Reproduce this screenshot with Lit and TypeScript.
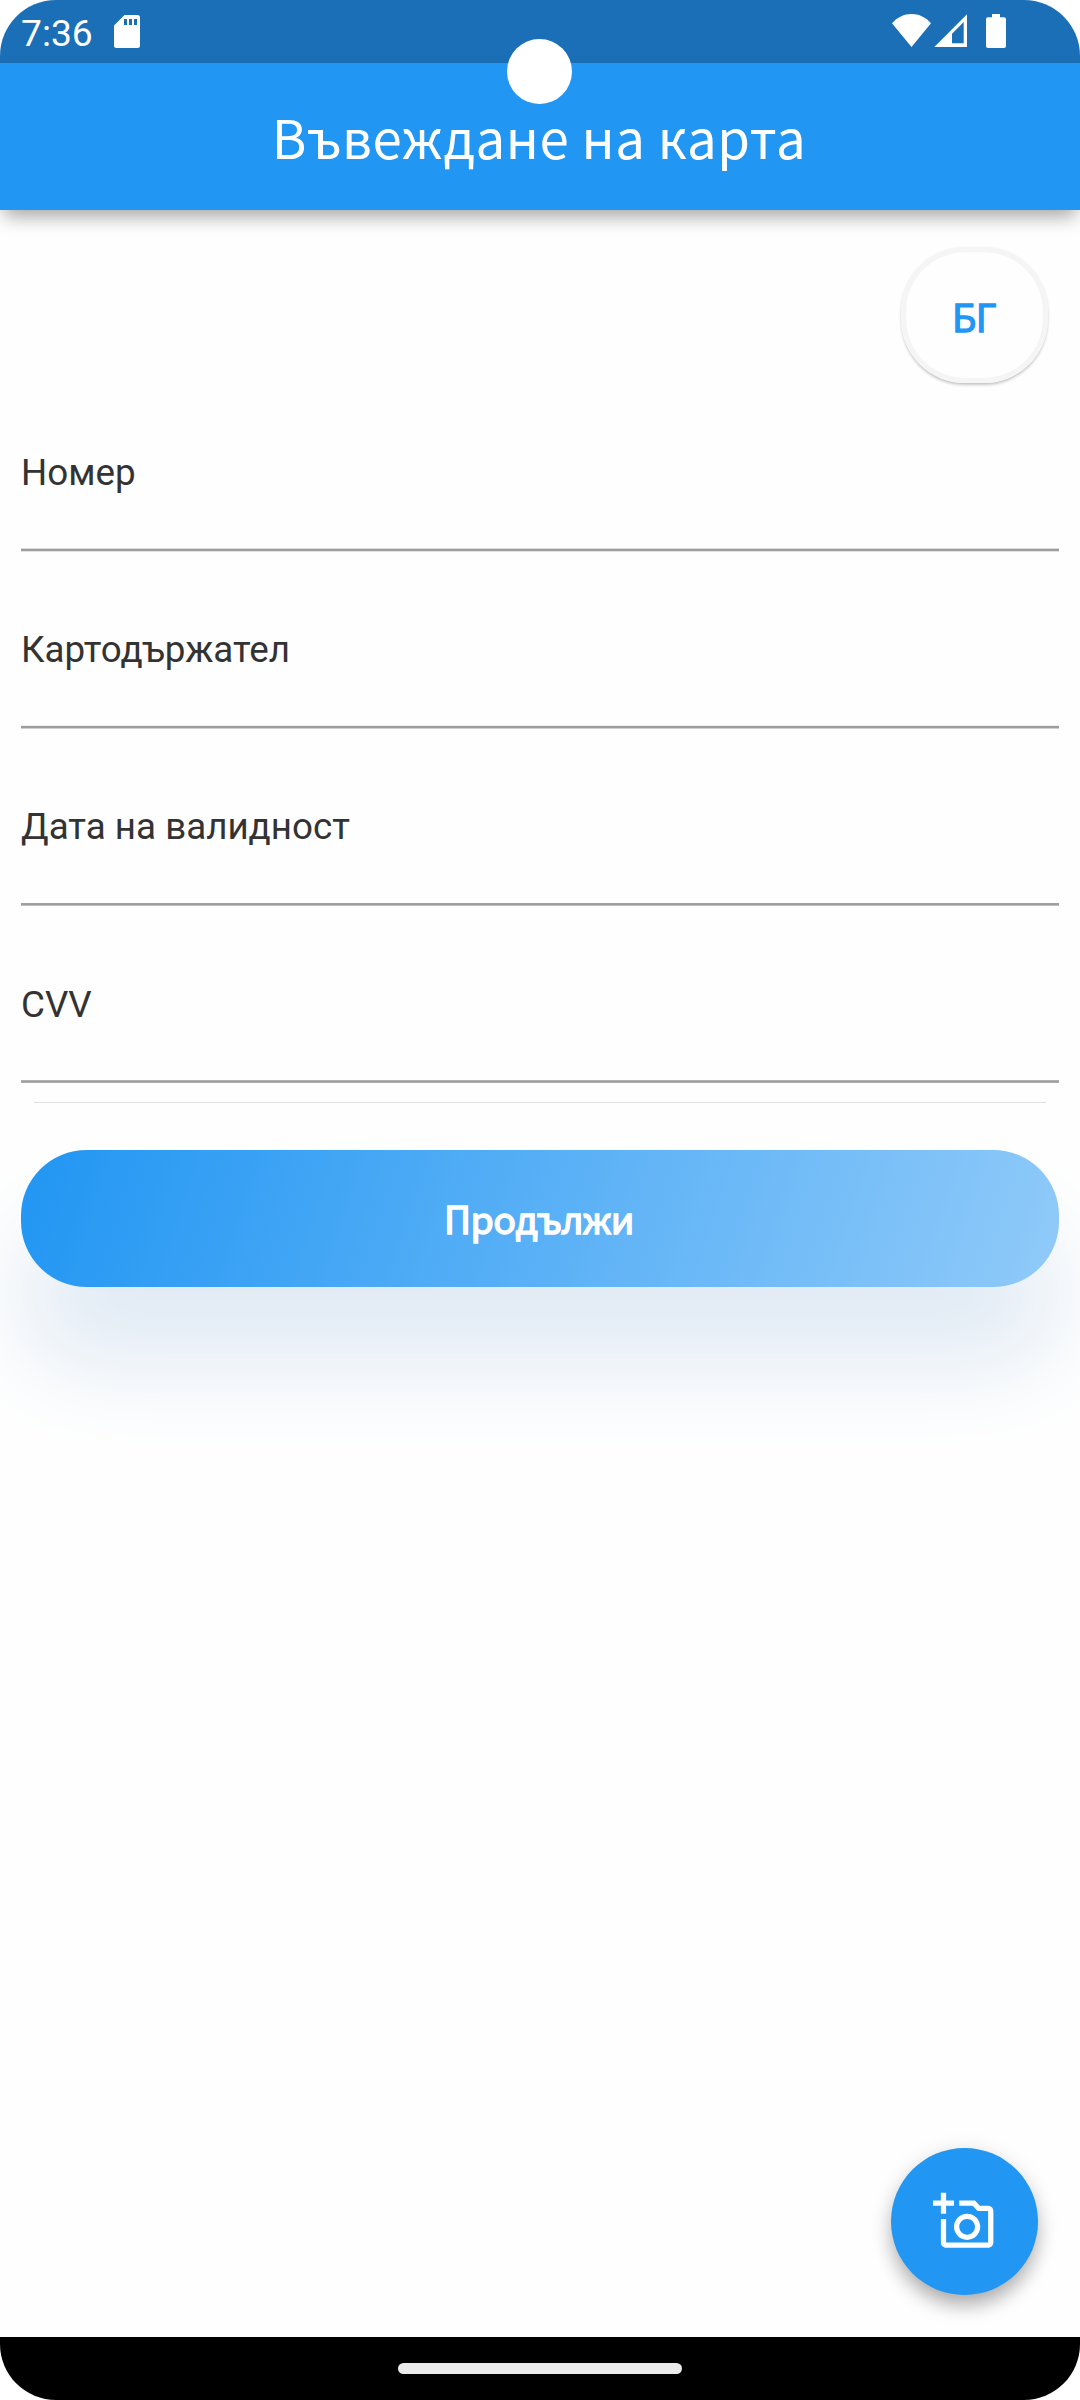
import { LitElement, html, css, svg } from "lit";
import { customElement, property } from "lit/decorators.js";

@customElement("status-bar")
class StatusBar extends LitElement {
  static styles = css`
    :host {
      display: flex;
      align-items: flex-start;
      height: 63px;
      box-sizing: border-box;
      padding: 0 74px 0 21px;
      background: #1a6fb6;
      color: #fff;
    }
    .time {
      font: 400 37.200px/43px Roboto, sans-serif;
      padding-top: 12px;
      width: 93px;
    }
    svg { display: block; fill: #fff; }
    .sd { margin-top: 15px; }
    .right { display: flex; margin: 14px 0 0 auto; }
    .signal { margin-left: 3px; }
    .battery { margin-left: 19px; }
  `;

  render() {
    return html`
      <span class="time">7:36</span>
      <svg class="sd" width="26" height="33" viewBox="0 0 26 33">
        <path fill-rule="evenodd" d="M10.5 0H23.500a2.500 2.500 0 0 1 2.500 2.500V30.500a2.500 2.500 0 0 1-2.500 2.500H2.500A2.500 2.500 0 0 1 0 30.500V10.500ZM10 4v6h3V4ZM15 4v6h3V4ZM20 4v6h3V4Z"/>
      </svg>
      <div class="right">
        <svg width="39" height="34" viewBox="0 0 39 34">
          <path d="M0 9.300C5.200 3.300 12 0 19.500 0S33.800 3.300 39 9.300L19.500 33Z"/>
        </svg>
        <svg class="signal" width="33" height="34" viewBox="0 0 33 34">
          <path fill-rule="evenodd" d="M0.300 33L33 0.300V33ZM18 19.700V29.300H29.700V8Z"/>
        </svg>
        <svg class="battery" width="20" height="34" viewBox="0 0 20 34">
          <path d="M6 0h8v3.300h4a2 2 0 0 1 2 2V32a2 2 0 0 1-2 2H2a2 2 0 0 1-2-2V5.300a2 2 0 0 1 2-2h4Z"/>
        </svg>
      </div>
    `;
  }
}

@customElement("card-field")
class CardField extends LitElement {
  @property() label = "";
  @property({ type: Number }) shift = 0;

  static styles = css`
    :host { display: flex; flex-direction: column; gap: 54px; }
    .label {
      font: 400 36.75px/43px Roboto, sans-serif;
      color: #333;
      white-space: nowrap;
    }
    svg { display: block; fill: #9d9d9d; }
  `;

  render() {
    return html`
      <label class="label">${this.label}</label>
      <svg width="1038" height="5">
        ${svg`<rect x="0" y=${this.shift} width="1038" height="2.625"/>`}
      </svg>
    `;
  }
}

@customElement("app-root")
class AppRoot extends LitElement {
  private fields = [
    { label: "Номер", shift: 0.65 },
    { label: "Картодържател", shift: 0.84 },
    { label: "Дата на валидност", shift: 1.03 },
    { label: "CVV", shift: 0.21 },
  ];

  static styles = css`
    :host {
      display: flex;
      flex-direction: column;
      position: relative;
      width: 1080px;
      height: 2400px;
      overflow: hidden;
      border-radius: 56px;
      background: #fefefe;
      font-family: "Noto Sans CJK JP", "Noto Sans", sans-serif;
    }
    .camera {
      position: absolute;
      left: 507px;
      top: 39px;
      width: 65px;
      height: 65px;
      border-radius: 50%;
      background: #fff;
      z-index: 2;
    }
    .header {
      display: flex;
      align-items: center;
      justify-content: center;
      height: 147px;
      box-sizing: border-box;
      padding-right: 2px;
      background: #2196f3;
      color: #fff;
      font-size: 52.800px;
      line-height: 75px;
      letter-spacing: 0.5px;
      white-space: nowrap;
      box-shadow: 0 10px 18px -4px rgba(0, 0, 0, 0.36);
    }
    .main {
      flex: 1;
      display: flex;
      flex-direction: column;
      padding: 37px 21px 42px;
    }
    .lang {
      align-self: flex-end;
      display: flex;
      align-items: center;
      justify-content: center;
      box-sizing: border-box;
      width: 147px;
      height: 136px;
      margin-right: 11px;
      border: 0;
      padding: 0 1px 0 0;
      border-radius: 64px;
      background: #fefefe;
      box-shadow: inset 0 0 0 5.250px #f5f5f5, 0 2.500px 3px -0.5px rgba(0, 0, 0, 0.22), 0 0 2px rgba(0, 0, 0, 0.06);
      color: #2196f3;
      -webkit-text-stroke: 1.300px #2196f3;
    }
    .lang, .submit {
      font-family: inherit;
      font-size: 37.500px;
      line-height: 55px;
      letter-spacing: -0.5px;
    }
    .fields {
      display: flex;
      flex-direction: column;
      gap: 75.1875px;
      padding-top: 68px;
    }
    .divider {
      height: 1px;
      margin: 17.4375px 13px 0;
      background: #dedede;
    }
    .submit {
      flex: none;
      height: 136.500px;
      margin-top: 47px;
      border: 0;
      padding: 0 2px 2px 0;
      border-radius: 65.600px;
      background: linear-gradient(108deg, #2196f3, #90caf9);
      box-shadow: 0 76px 92px #e0eaf4;
      color: #fff;
      -webkit-text-stroke: 1.500px #fff;
    }
    .fab {
      align-self: flex-end;
      display: flex;
      align-items: center;
      justify-content: center;
      width: 147px;
      height: 147px;
      margin: auto 21px 0 0;
      border: 0;
      padding: 0;
      border-radius: 50%;
      background: #2196f3;
      box-shadow: 0 13px 20px -3px rgba(0, 0, 0, 0.27), 0 4px 22px rgba(0, 0, 0, 0.12);
    }
    .fab svg { display: block; fill: #fff; }
    .nav {
      display: flex;
      justify-content: center;
      align-items: center;
      height: 63px;
      background: #000;
    }
    .handle {
      width: 284px;
      height: 11px;
      border-radius: 5.500px;
      background: #ebebeb;
    }
  `;

  render() {
    return html`
      <status-bar></status-bar>
      <div class="camera"></div>
      <header class="header">Въвеждане на карта</header>
      <main class="main">
        <button class="lang">БГ</button>
        <div class="fields">
          ${this.fields.map((f) => html`<card-field .label=${f.label} .shift=${f.shift}></card-field>`)}
        </div>
        <div class="divider"></div>
        <button class="submit">Продължи</button>
        <button class="fab">
          <svg width="63" height="63" viewBox="0 0 24 24">
            <path d="M21 6h-3.170L16 4h-6v2h5.120l1.830 2H21v12H5v-9H3v9c0 1.100.9 2 2 2h16c1.100 0 2-.9 2-2V8c0-1.100-.9-2-2-2zM8 14c0 2.760 2.240 5 5 5s5-2.240 5-5-2.240-5-5-5-5 2.240-5 5zm5-3c1.650 0 3 1.350 3 3s-1.350 3-3 3-3-1.350-3-3 1.350-3 3-3zM5 6h3V4H5V1H3v3H0v2h3v3h2z"/>
          </svg>
        </button>
      </main>
      <footer class="nav"><div class="handle"></div></footer>
    `;
  }
}
